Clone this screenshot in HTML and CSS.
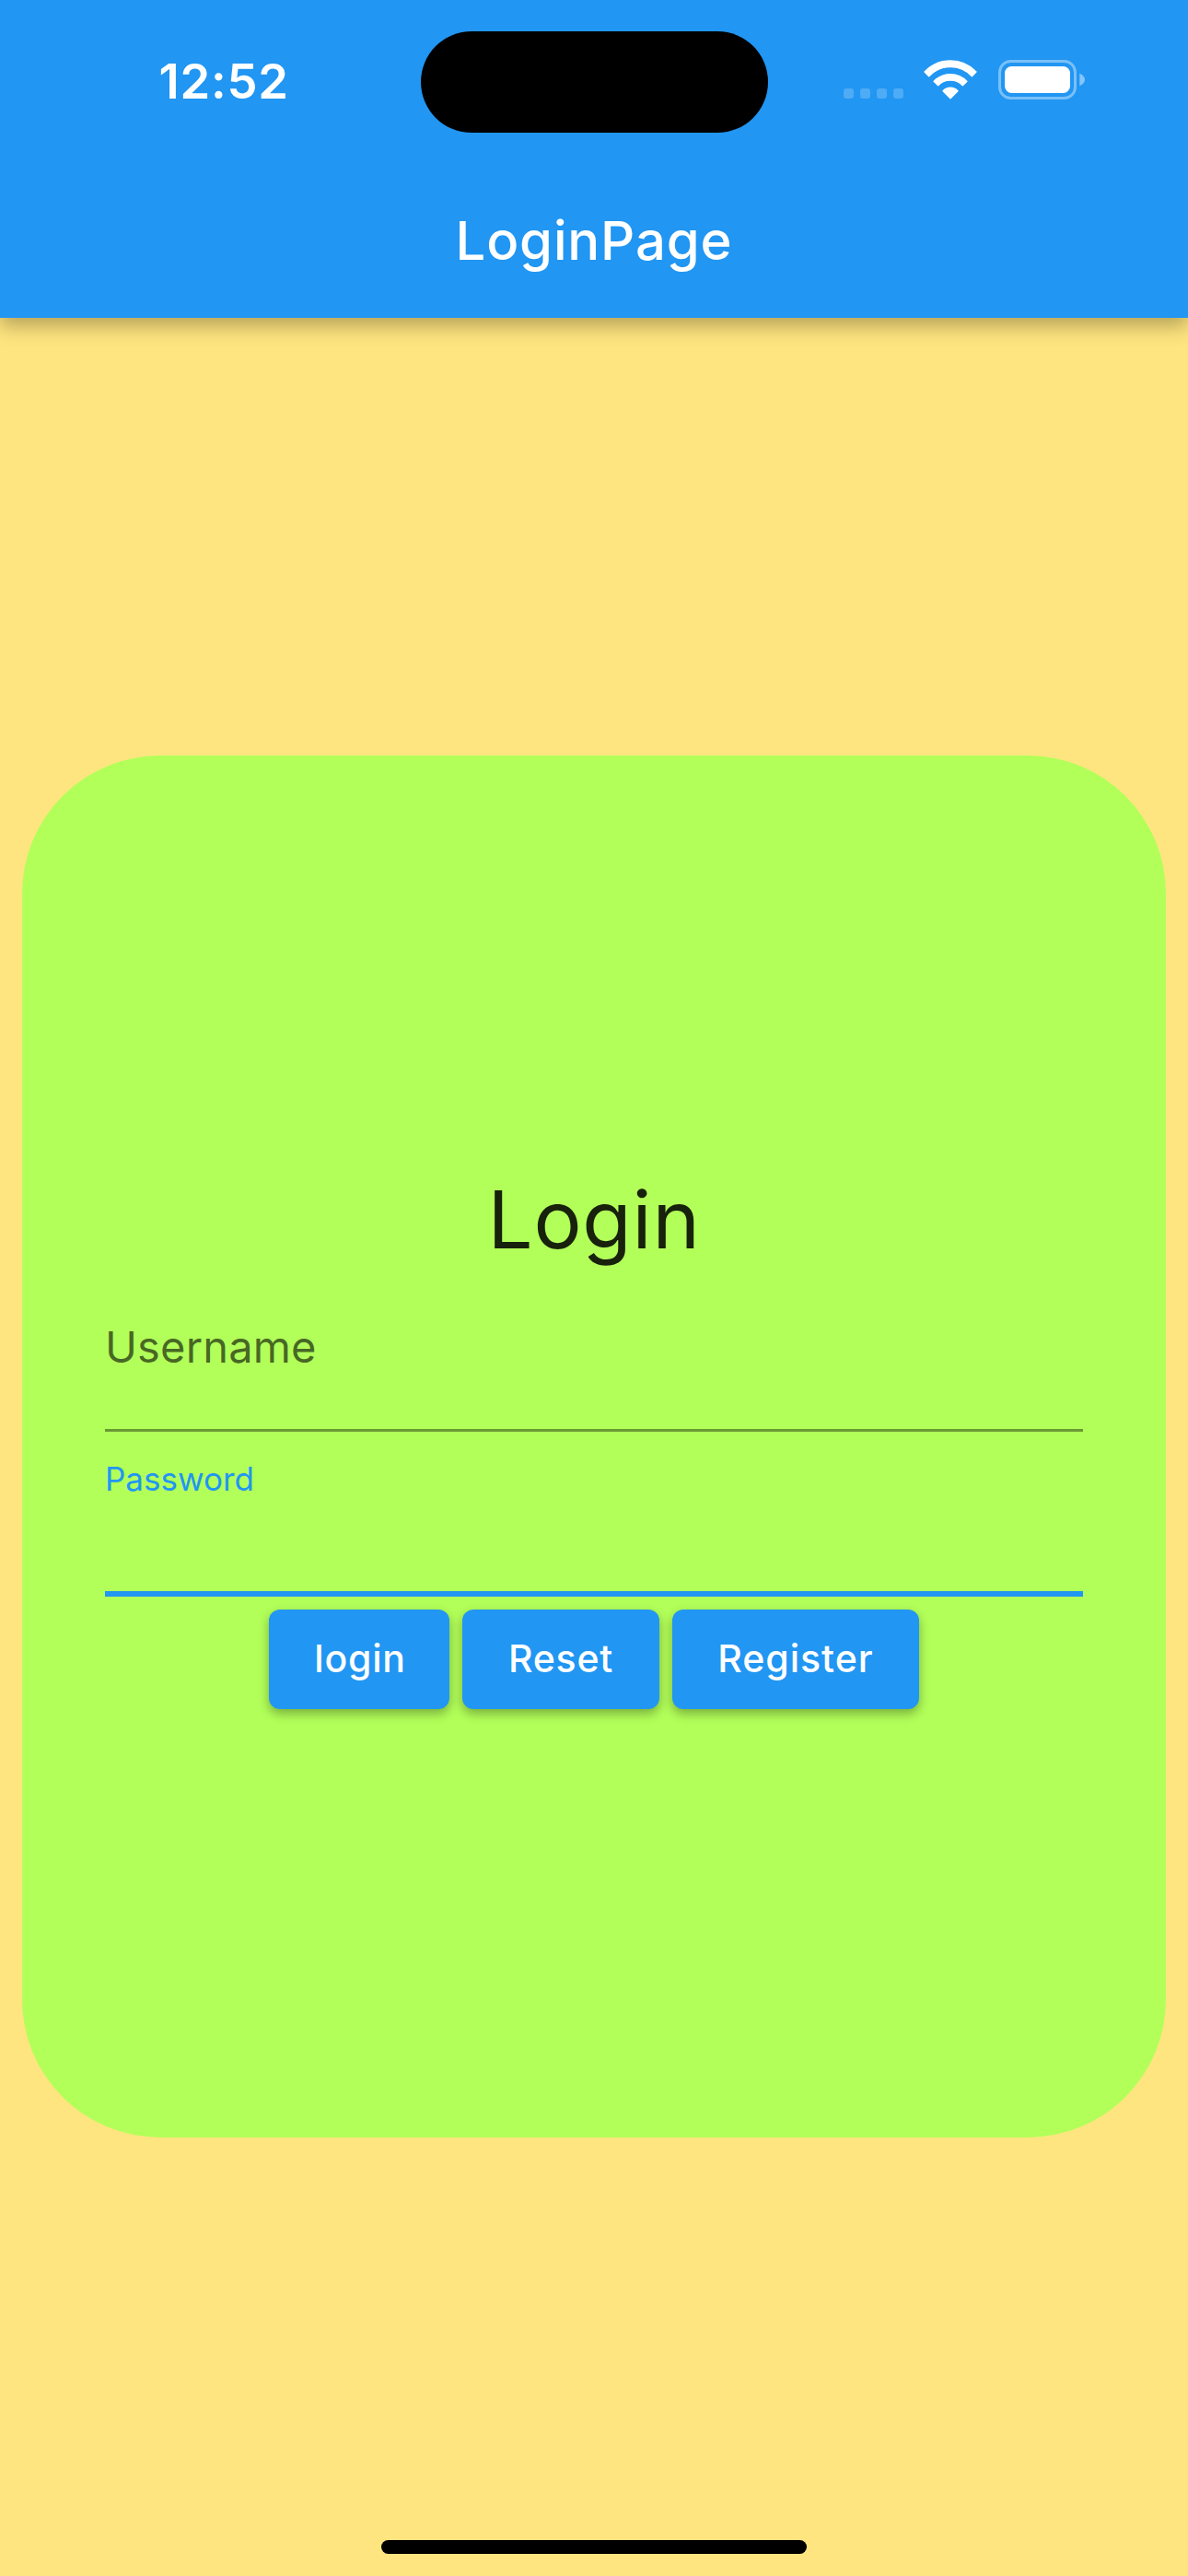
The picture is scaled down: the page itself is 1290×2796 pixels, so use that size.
FILE: index.html
```html
<!DOCTYPE html>
<html lang="en">
<head>
<meta charset="utf-8">
<title>LoginPage</title>
<link rel="stylesheet" href="styles.css">
</head>
<body>
<div class="screen">
  <header class="app-bar">
    <div class="status-bar">
      <div class="time">12:52</div>
      <div class="island"></div>
      <div class="status-icons">
        <svg class="signal" viewBox="0 0 65 11"><g fill="#fff" opacity=".2"><rect width="11" height="11" rx="3"/><rect x="18" width="11" height="11" rx="3"/><rect x="36" width="11" height="11" rx="3"/><rect x="54" width="11" height="11" rx="3"/></g></svg>
        <svg class="wifi" viewBox="0 0 174 128"><g fill="#fff" stroke="#fff" stroke-width="4" stroke-linejoin="round"><path d="M3 39A116 116 0 0 1 171 39L157 53A96 96 0 0 0 17 53Z"/><path d="M33 70A74 74 0 0 1 141 70L127 83A56 56 0 0 0 47 83Z"/><path d="M63 101A33 33 0 0 1 111 101L87 125Z"/></g></svg>
        <svg class="battery" viewBox="0 0 94 43"><rect x="1.5" y="1.5" width="82" height="40" rx="12" fill="none" stroke="#fff" stroke-width="3" opacity=".4"/><rect x="7" y="7" width="71" height="29" rx="7.5" fill="#fff"/><path d="M88.3 14.7C92 16 94 19 94 21.5S92 27 88.3 28.3Z" fill="#fff" opacity=".45"/></svg>
      </div>
    </div>
    <h1 class="title">LoginPage</h1>
  </header>
  <main class="content">
    <form class="card">
      <h2 class="heading">Login</h2>
      <div class="field username"><label>Username</label></div>
      <div class="field password"><label>Password</label></div>
      <div class="actions">
        <button type="button" class="btn btn-login">login</button>
        <button type="button" class="btn btn-reset">Reset</button>
        <button type="button" class="btn btn-register">Register</button>
      </div>
    </form>
  </main>
  <div class="home-indicator"></div>
</div>
</body>
</html>
```
FILE: styles.css
```css
* { box-sizing: border-box; }
body { margin: 0; font-family: Inter, "Liberation Sans", sans-serif; }
.screen {
  width: 1290px;
  height: 2796px;
  display: flex;
  flex-direction: column;
  align-items: center;
  background: #ffe57f;
  overflow: hidden;
}
.app-bar {
  width: 100%;
  height: 345px;
  flex: none;
  background: #2196f3;
  color: #fff;
  box-shadow: 0 9px 20px rgba(0, 0, 0, .29);
}
.status-bar {
  height: 177px;
  display: grid;
  grid-template-columns: 456.5px 377px 456.5px;
  align-items: start;
}
.time {
  padding: 55.5px 0 0 172.5px;
  font-size: 52.5px;
  font-weight: 600;
  line-height: 64px;
  letter-spacing: .76px;
}
.island {
  height: 110px;
  margin-top: 34px;
  border-radius: 56px;
  background: #000;
}
.status-icons {
  display: flex;
  align-items: flex-end;
  padding: 65px 0 0 82.5px;
}
.status-icons svg { display: block; flex: none; }
.signal { width: 65px; height: 11px; margin-bottom: 1px; }
.wifi { width: 58px; height: 42.7px; margin: 0 22.5px 0 22px; }
.battery { width: 94px; height: 43px; }
.title {
  margin: 0;
  font-size: 58px;
  font-weight: 500;
  line-height: 168px;
  letter-spacing: .86px;
  text-align: center;
}
.content { flex: 1; padding-top: 475px; }
.card {
  width: 1242px;
  height: 1500px;
  padding: 454px 90px 0;
  border-radius: 150px;
  background: #b2ff59;
}
.heading {
  margin: 0 0 9px;
  font-size: 87px;
  font-weight: 400;
  line-height: 100px;
  letter-spacing: .8px;
  text-align: center;
  color: rgba(0, 0, 0, .87);
}
.field label { display: block; }
.username {
  height: 171px;
  padding-top: 49px;
  border-bottom: 3px solid rgba(0, 0, 0, .4);
  color: rgba(0, 0, 0, .6);
  font-size: 47px;
  line-height: 60px;
  letter-spacing: .15px;
}
.password {
  height: 178.5px;
  padding-top: 30.3px;
  border-bottom: 6px solid #2196f3;
  color: #2196f3;
  font-size: 35px;
  line-height: 42px;
}
.actions {
  display: flex;
  justify-content: center;
  gap: 14.6px;
  padding-top: 14.5px;
}
.btn {
  height: 108px;
  padding: 0 0 1px;
  border: 0;
  border-radius: 12px;
  background: #2196f3;
  color: #fff;
  font: 500 41px/107px Inter, "Liberation Sans", sans-serif;
  letter-spacing: .76px;
  box-shadow: 0 5px 12px rgba(0, 0, 0, .32);
}
.btn-login { width: 195.4px; padding-left: 2px; }
.btn-reset { width: 213.3px; }
.btn-register { width: 267.5px; letter-spacing: .98px; }
.home-indicator {
  width: 462px;
  height: 15px;
  margin-bottom: 24px;
  flex: none;
  border-radius: 8px;
  background: #000;
}
```
